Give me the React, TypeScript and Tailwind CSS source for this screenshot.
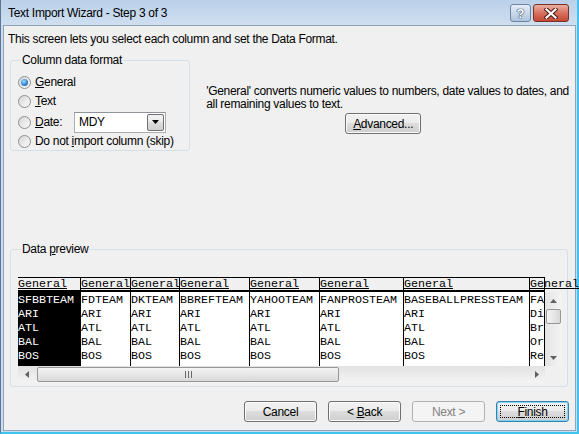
import React from "react";

const colWidths = [
  "w-[62px]",
  "w-[50px]",
  "w-[49px]",
  "w-[70px]",
  "w-[70px]",
  "w-[84px]",
  "w-[126px]",
  "w-[16px] border-r",
];

const rows = [
  ["SFBBTEAM", "FDTEAM", "DKTEAM", "BBREFTEAM", "YAHOOTEAM", "FANPROSTEAM", "BASEBALLPRESSTEAM", "FA"],
  ["ARI", "ARI", "ARI", "ARI", "ARI", "ARI", "ARI", "Di"],
  ["ATL", "ATL", "ATL", "ATL", "ATL", "ATL", "ATL", "Br"],
  ["BAL", "BAL", "BAL", "BAL", "BAL", "BAL", "BAL", "Or"],
  ["BOS", "BOS", "BOS", "BOS", "BOS", "BOS", "BOS", "Re"],
];

function Radio({ checked }: { checked?: boolean }) {
  return (
    <span className="flex h-[13px] w-[13px] shrink-0 items-center justify-center rounded-full border border-[#8e8f8f] bg-linear-to-br from-[#d6d6d6] to-[#fbfbfb]">
      {checked && (
        <span className="h-[7px] w-[7px] rounded-full bg-[radial-gradient(circle_at_40%_35%,#a6dcff,#2a7fc9_60%,#1b5b99)]" />
      )}
    </span>
  );
}

function WinButton({
  children,
  className = "",
  disabled,
  focused,
}: {
  children: React.ReactNode;
  className?: string;
  disabled?: boolean;
  focused?: boolean;
}) {
  if (disabled) {
    return (
      <div
        className={`flex h-[21px] items-center justify-center rounded-[3px] border border-[#adb2b5] bg-[#f4f4f4] text-[#838383] ${className}`}
      >
        {children}
      </div>
    );
  }
  return (
    <div
      className={`relative flex h-[21px] items-center justify-center rounded-[3px] border bg-[linear-gradient(to_bottom,#f2f2f2_0%,#ebebeb_50%,#dddddd_50%,#cfcfcf_100%)] ${
        focused
          ? "border-[#3c7fb1] shadow-[inset_0_0_0_1px_#7fd6f3]"
          : "border-[#707070] shadow-[inset_0_0_0_1px_#fbfbfb]"
      } ${className}`}
    >
      {focused && (
        <span className="absolute inset-[3px] border border-dotted border-black" />
      )}
      <span className="relative">{children}</span>
    </div>
  );
}

function Tri({ dir }: { dir: "up" | "down" | "left" | "right" }) {
  const pts = {
    up: "0,4 3.5,0 7,4",
    down: "0,0 7,0 3.5,4",
    left: "4,0 4,7 0,3.5",
    right: "0,0 0,7 4,3.5",
  }[dir];
  const horiz = dir === "left" || dir === "right";
  return (
    <svg width={horiz ? 4 : 7} height={horiz ? 7 : 4} viewBox={horiz ? "0 0 4 7" : "0 0 7 4"}>
      <polygon points={pts} fill="#606060" />
    </svg>
  );
}

function App() {
  return (
    <div className="flex h-[434px] w-[579px] flex-col border-b-2 border-l border-r-2 border-b-[#3fc4ee] border-l-[#5d7592] border-r-[#3fc4ee] bg-[#c9dbee] font-['Liberation_Sans',Arial,sans-serif] text-[12px] tracking-[-0.3px] text-black">
      {/* title bar */}
      <div className="flex h-[25px] shrink-0 items-start bg-linear-to-b from-[#bad0e9] to-[#cfdff0]">
        <span className="ml-[7px] mt-[6px] leading-[15px]">Text Import Wizard - Step 3 of 3</span>
        <div className="ml-auto mr-[8px] mt-[4px] flex gap-[2px]">
          <div className="flex h-[18px] w-[21px] items-center justify-center rounded-[3px] border border-[#6f84a0] bg-linear-to-b from-[#e6eef8] via-[#c9d8ea] to-[#aec4de]">
            <span className="text-[13px] font-bold leading-none tracking-normal text-white [text-shadow:0_0_1px_#2a3a55,0_0_1px_#2a3a55,0_0_1px_#2a3a55]">
              ?
            </span>
          </div>
          <div className="flex h-[18px] w-[36px] items-center justify-center rounded-[3px] border border-[#7a3027] bg-linear-to-b from-[#eab0a3] via-[#d6705f] to-[#c44a35]">
            <svg width="14" height="11" viewBox="0 0 14 11">
              <path d="M2.5 1.5 L11.5 9.5 M11.5 1.5 L2.5 9.5" stroke="#4a1a14" strokeWidth="4.2" strokeLinecap="square" />
              <path d="M2.5 1.5 L11.5 9.5 M11.5 1.5 L2.5 9.5" stroke="#ffffff" strokeWidth="2.2" strokeLinecap="square" />
            </svg>
          </div>
        </div>
      </div>

      {/* client area */}
      <div className="mb-[1px] ml-[2px] mr-[1px] flex flex-1 flex-col border border-[#8ea3bc] bg-[#f0f0f0] pr-[6px]">
        <div className="ml-[4px] mt-[6px] whitespace-nowrap leading-[15px]">
          This screen lets you select each column and set the Data Format.
        </div>

        <div className="mt-[6px] flex">
          <fieldset className="ml-[6px] w-[181px] rounded-[3px] border border-[#d5dfe5] pb-[1px] pl-[7px]">
            <legend className="ml-[3px] px-[1px] leading-[15px]">Column data format</legend>
            <div className="mt-[5px] flex h-[18px] items-center gap-[4px]">
              <Radio checked />
              <span>
                <u>G</u>eneral
              </span>
            </div>
            <div className="flex h-[20px] items-center gap-[4px]">
              <Radio />
              <span>
                <u>T</u>ext
              </span>
            </div>
            <div className="flex h-[22px] items-center gap-[4px]">
              <Radio />
              <span className="w-[35px]">
                <u>D</u>ate:
              </span>
              <div className="flex h-[21px] w-[92px] items-center border border-[#abadb3] border-t-[#8f939a] bg-white pl-[4px]">
                <span className="flex-1">MDY</span>
                <div className="mr-[1px] flex h-[17px] w-[17px] items-center justify-center rounded-[2px] border border-[#707070] bg-[linear-gradient(to_bottom,#f2f2f2_0%,#ebebeb_50%,#dddddd_50%,#cfcfcf_100%)]">
                  <svg width="7" height="4" viewBox="0 0 7 4">
                    <polygon points="0,0 7,0 3.5,4" fill="#000" />
                  </svg>
                </div>
              </div>
            </div>
            <div className="flex h-[16px] items-center gap-[4px]">
              <Radio />
              <span className="whitespace-nowrap">
                Do not <u>i</u>mport column (skip)
              </span>
            </div>
          </fieldset>

          <div className="ml-[16px] flex flex-col pt-[32px]">
            <div className="whitespace-nowrap leading-[13px]">
              'General' converts numeric values to numbers, date values to dates, and
              <br />
              all remaining values to text.
            </div>
            <WinButton className="ml-[139px] mt-[2px] w-[76px]">
              <u>A</u>dvanced...
            </WinButton>
          </div>
        </div>

        <fieldset className="ml-[6px] mt-[91px] w-[558px] rounded-[3px] border border-[#d5dfe5] pb-[3px] pl-[7px]">
          <legend className="ml-[3px] px-[1px] leading-[15px]">
            Data <u>p</u>review
          </legend>
          <div className="mt-[20px] flex w-[544px] flex-col font-['Liberation_Mono',monospace] text-[11.67px] tracking-normal">
            {/* header */}
            <div className="flex h-[15px]">
              <div className="flex w-[527px] border-b-2 border-t border-black">
                {colWidths.map((w, i) => (
                  <div
                    key={i}
                    className={`${w} whitespace-nowrap leading-[13px] ${i > 0 ? "border-l border-black" : ""}`}
                  >
                    <span className="underline">General</span>
                  </div>
                ))}
              </div>
            </div>
            {/* body */}
            <div className="flex h-[74px]">
              <div className="flex w-[527px] overflow-hidden bg-white">
                {colWidths.map((w, i) => (
                  <div
                    key={i}
                    className={`${w} overflow-hidden whitespace-nowrap pt-[1px] leading-[14px] ${
                      i === 0 ? "bg-black text-white" : "border-l border-black"
                    }`}
                  >
                    {rows.map((r, j) => (
                      <div key={j}>{r[i]}</div>
                    ))}
                  </div>
                ))}
              </div>
              <div className="flex w-[17px] flex-col items-center bg-linear-to-r from-[#e4e4e4] to-[#f4f4f4]">
                <div className="flex h-[17px] items-center justify-center">
                  <Tri dir="up" />
                </div>
                <div className="h-[15px] w-[15px] rounded-[2px] border border-[#979797] bg-linear-to-r from-[#f4f4f4] to-[#d9d9d9]" />
                <div className="flex-1" />
                <div className="flex h-[17px] items-center justify-center">
                  <Tri dir="down" />
                </div>
              </div>
            </div>
            {/* horizontal scrollbar */}
            <div className="flex h-[17px]">
              <div className="flex w-[527px] items-center bg-linear-to-b from-[#e2e2e2] to-[#f4f4f4]">
                <div className="flex h-[17px] w-[17px] items-center justify-center">
                  <Tri dir="left" />
                </div>
                <div className="ml-[2px] flex h-[15px] w-[302px] items-center justify-center gap-[2px] rounded-[2px] border border-[#979797] bg-linear-to-b from-[#f4f4f4] to-[#d9d9d9]">
                  <span className="h-[7px] w-[1px] bg-[#6a6a6a]" />
                  <span className="h-[7px] w-[1px] bg-[#6a6a6a]" />
                  <span className="h-[7px] w-[1px] bg-[#6a6a6a]" />
                </div>
                <div className="flex-1" />
                <div className="flex h-[17px] w-[17px] items-center justify-center">
                  <Tri dir="right" />
                </div>
              </div>
              <div className="w-[17px] bg-[#f0f0f0]" />
            </div>
          </div>
        </fieldset>

        <div className="mt-[14px] flex justify-end gap-[11px]">
          <WinButton className="w-[73px]">Cancel</WinButton>
          <WinButton className="w-[73px]">
            &lt; <u>B</u>ack
          </WinButton>
          <WinButton className="w-[73px]" disabled>
            Next &gt;
          </WinButton>
          <WinButton className="w-[73px]" focused>
            <u>F</u>inish
          </WinButton>
        </div>
      </div>
    </div>
  );
}

export default App;
